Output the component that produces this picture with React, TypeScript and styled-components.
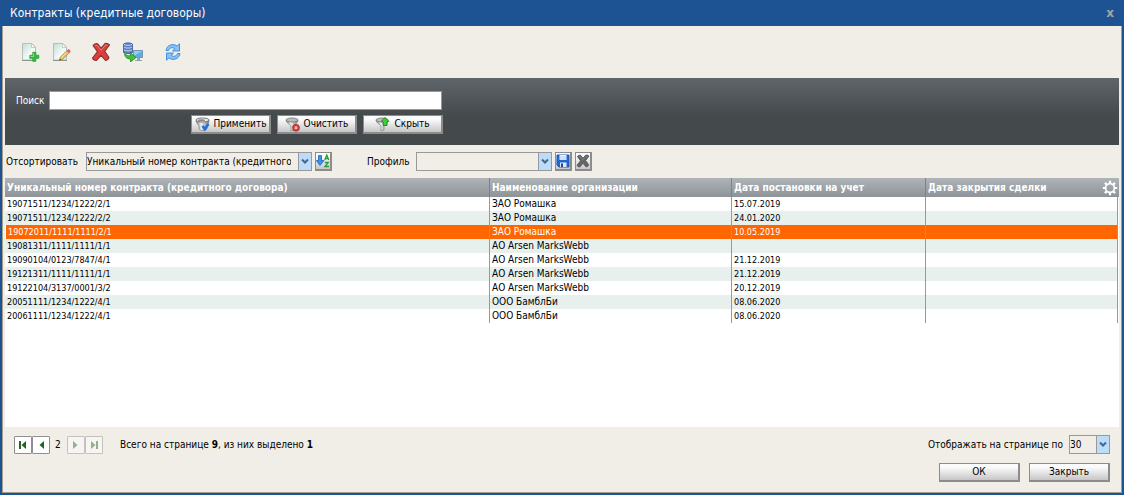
import React, { useState } from "react";
import styled, { createGlobalStyle, css } from "styled-components";

const GlobalStyle = createGlobalStyle`
  * { box-sizing: border-box; }
  body { margin: 0; background: #1e5393; }
  body, button, input, select {
    font-family: "DejaVu Sans Condensed", "DejaVu Sans", Verdana, sans-serif;
    font-size: 10px;
    line-height: 14px;
    color: #000;
  }
`;

const Window = styled.main`
  display: flex;
  flex-direction: column;
  min-height: 100vh;
  padding: 0 2px 2px;
  background: #1e5393;
`;

const TitleBar = styled.header`
  display: flex;
  align-items: center;
  justify-content: space-between;
  height: 26px;
  padding: 0 8px;
`;

const Title = styled.h1`
  margin: 0;
  font-size: 12px;
  line-height: 16px;
  font-weight: 400;
  color: #fff;
`;

const CloseButton = styled.button`
  padding: 0;
  border: 0;
  background: none;
  font-family: "DejaVu Sans", Verdana, sans-serif;
  font-size: 12px;
  line-height: 16px;
  font-weight: 700;
  color: #a3a6a5;
`;

const Body = styled.div`
  flex: 1;
  display: flex;
  flex-direction: column;
  padding: 0 2px;
  border: solid #a39f90;
  border-width: 0 1px 1px;
  background: #f1eee7;
`;

const Toolbar = styled.nav`
  display: flex;
  align-items: center;
  height: 52px;
  padding-left: 16px;
  gap: 11px;
`;

const ToolGroup = styled.div`
  display: flex;
  gap: 11px;
  & + & { margin-left: 8px; }
`;

const ToolButton = styled.button`
  display: flex;
  padding: 0;
  border: 0;
  background: none;
`;

const SearchPanel = styled.form`
  height: 67px;
  padding: 13px 11px 0;
  background: linear-gradient(#60656a, #44494c 58%);
`;

const SearchBox = styled.div`
  display: flex;
  flex-direction: column;
  gap: 5px;
  max-width: 427px;
`;

const SearchLine = styled.label`
  display: flex;
  align-items: center;
  gap: 4px;
  padding-right: 1px;
  color: #fff;
`;

const SearchInput = styled.input`
  flex: 1;
  min-width: 0;
  height: 19px;
  padding: 0 2px;
  border: 1px solid #979a9c;
  background: #fff;
`;

const SearchActions = styled.div`
  display: flex;
  justify-content: flex-end;
  gap: 6px;
`;

const raised = css`
  display: flex;
  align-items: center;
  justify-content: center;
  height: 19px;
  padding: 0;
  border: solid #8c8c8c;
  border-width: 1px 2px 2px 1px;
  background: linear-gradient(#fbfbfb 20%, #c6c6c6);
`;

const RaisedButton = styled.button<{ $width: number }>`
  ${raised}
  width: ${(p) => p.$width}px;
  gap: 3px;
`;

const IconButton = styled.button`
  ${raised}
  width: 17px;
`;

const SortBar = styled.div`
  display: flex;
  align-items: center;
  height: 33px;
  gap: 3px;
`;

const Field = styled.label<{ $labelWidth: number }>`
  display: flex;
  align-items: center;
  & > span:first-child { width: ${(p) => p.$labelWidth}px; padding-left: 1px; }
`;

const ProfileField = styled(Field)`
  margin-left: 31px;
`;

const SelectBox = styled.span<{ $width: number }>`
  position: relative;
  display: flex;
  width: ${(p) => p.$width}px;
  height: 19px;

  select {
    width: 100%;
    padding: 0 20px 0 0;
    border: 1px solid #999;
    border-radius: 0;
    background: #f1eee7;
    appearance: none;
  }
`;

const Arrow = styled.span`
  position: absolute;
  top: 1px;
  right: 1px;
  bottom: 1px;
  display: flex;
  align-items: center;
  justify-content: center;
  width: 13px;
  border-left: 1px solid #999;
  background: #bcdcfa;
  pointer-events: none;
`;

const TableArea = styled.section`
  position: relative;
  flex: 1;
  min-height: 249px;
  background: #fff;
`;

const Table = styled.table`
  width: 100%;
  table-layout: fixed;
  border-collapse: separate;
  border-spacing: 0;
`;

const HeadRow = styled.tr`
  background: linear-gradient(#afb4b8, #8d9397);

  th {
    height: 19px;
    padding: 0 2px;
    border-right: 1px solid #7f8386;
    text-align: left;
    color: #fff;
    white-space: nowrap;
    overflow: hidden;
  }
  th:last-child { border-right: 0; }
`;

const DataRow = styled.tr<{ $selected: boolean }>`
  background: #fff;
  &:nth-child(even) { background: #e8f0ed; }

  td {
    height: 14px;
    padding: 0 2px;
    border-right: 1px solid #999;
    font-size: 9px;
    white-space: nowrap;
    overflow: hidden;
  }
  td:nth-child(2) { font-size: 10px; }
  td:last-child {
    border-right-color: #fff;
    box-shadow: inset -1px 0 #999;
  }

  ${(p) => p.$selected && css`
    && { background: #f60; }
    td { color: #fff; }
    td:first-child { border-left: 1px solid #fff; }
  `}
`;

const SettingsButton = styled.button`
  position: absolute;
  top: 2px;
  right: 1px;
  padding: 0;
  border: 0;
  background: none;
  display: flex;
`;

const Footer = styled.footer`
  padding: 8px 9px 10px;
`;

const FooterLine = styled.div`
  display: flex;
  align-items: center;
  justify-content: space-between;
  height: 19px;
`;

const Pager = styled.div`
  display: flex;
  align-items: center;
`;

const PagerButton = styled.button`
  display: flex;
  align-items: center;
  justify-content: center;
  width: 18px;
  height: 18px;
  padding: 0;
  border: 1px solid #8e8f94;
  border-radius: 1px;
  background: #fff;
  color: #226422;
  &:disabled { opacity: 0.45; }
`;

const PageNumber = styled.span`
  width: 17px;
  padding-left: 5px;
`;

const Summary = styled.span`
  margin-left: 17px;
`;

const DialogActions = styled.div`
  display: flex;
  justify-content: flex-end;
  gap: 9px;
  margin-top: 9px;
`;

const ChevronIcon = () => (
  <svg width="8" height="7" viewBox="0 0 8 7"><path d="M1 1.5 4 4.5 7 1.5" fill="none" stroke="#46678c" strokeWidth="2" /></svg>
);

const DropDown = ({ width, options, label }: { width: number; options: string[]; label?: string }) => (
  <SelectBox $width={width}>
    <select aria-label={label}>{options.map((o) => <option key={o}>{o}</option>)}</select>
    <Arrow><ChevronIcon /></Arrow>
  </SelectBox>
);

const Sheet = () => (
  <>
    <linearGradient id="sheet" x1="0" y1="0" x2="1" y2="1">
      <stop offset="0" stopColor="#c3dcd6" /><stop offset="0.6" stopColor="#f4faf8" /><stop offset="1" stopColor="#e4eeeb" />
    </linearGradient>
    <path d="M1.500 1.500h9.500l3.500 3.500v13h-13z" fill="url(#sheet)" stroke="#b4c0bc" />
    <path d="M1 18.500h14" stroke="#8a9793" />
    <path d="M10.500 1.500v4h4z" fill="#fff" stroke="#b4c0bc" strokeWidth="0.8" />
  </>
);

const AddIcon = () => (
  <svg width="20" height="20" viewBox="0 0 20 20">
    <Sheet />
    <path d="M10.800 10.500h3v3h3v3h-3v3h-3v-3h-3v-3h3z" fill="#2fbe3c" stroke="#2a9f36" strokeWidth="0.8" transform="translate(1 -.2)" />
    <path d="M12.500 11.500v3h-3" fill="none" stroke="#7ee37f" />
  </svg>
);

const EditIcon = () => (
  <svg width="20" height="20" viewBox="0 0 20 20">
    <Sheet />
    <path d="m7.500 18.500.8-3.300 6-6 2.300 2.300-6 6z" fill="#e8c35c" stroke="#a98836" strokeWidth="0.8" />
    <path d="m9.300 15.800 5.500-5.500" stroke="#fbeaa0" />
    <path d="m13.800 9.700 1-1 2.300 2.300-1 1z" fill="#b9bcc2" />
    <path d="m14.800 8.700 1-1q1-.6 1.800.3t.5 2l-1 1z" fill="#e86064" stroke="#c95054" strokeWidth="0.5" />
    <path d="m7.500 18.500.4-1.800 1.400 1.400z" fill="#443a22" />
  </svg>
);

const CrossIcon = ({ size = 20, fill = "#d8403e", edge = "#8a3030", shine = "#ee7d78" }) => (
  <svg width={size} height={size} viewBox="0 0 20 20">
    <path d="M2 3.500Q4 1.300 6.500 1.700L10 6.200 14 1.500Q16.500 1 18.500 3L13.700 9.300 18 15.500Q17.500 18 14.500 18.500L10 13.300 5.500 18.500Q2 18.500 1.500 16L6.500 9.700z" fill={fill} stroke={edge} strokeWidth="1.100" strokeLinejoin="round" />
    <path d="M4 3.800 6 3.200 10 8.300 14.600 3 16.500 3.200" fill="none" stroke={shine} strokeWidth="1" />
  </svg>
);

const TransferIcon = () => (
  <svg width="22" height="20" viewBox="0 0 22 20">
    <path d="M1.500 2C3 .5 9 .5 10.500 2v8.500C9 12 3 12 1.500 10.500z" fill="#5b7fc4" stroke="#3a5797" strokeWidth="0.8" />
    <path d="M2 2.500c2 1.200 6 1.200 8 0M2 5.200c2 1.200 6 1.200 8 0M2 8c2 1.200 6 1.200 8 0" fill="none" stroke="#c6d6f2" />
    <path d="M11.500 8.500h9v7h-9z" fill="#58aee6" stroke="#7795b0" />
    <path d="M12 9h8l-8 5z" fill="#8ccdf5" />
    <path d="M15 16h3v2h2v1h-7v-1h2z" fill="#98a0a8" />
    <path d="M2.500 11.500c1.500 2 3.500 2.500 6 2.200V11l5.500 4.500L8.500 20v-3C4.500 17 2.500 14.500 2.500 11.500z" fill="#3fc235" stroke="#218a24" strokeWidth="0.8" />
  </svg>
);

const RefreshIcon = () => (
  <svg width="20" height="20" viewBox="0 0 20 20" fill="#86c3f8" stroke="#3a86d8" strokeWidth="0.9" strokeLinejoin="round">
    <path d="M3 8.500C3.500 3.500 9.500 .8 14.200 4L16.500 1.800V9H9.500l2.300-2.400C9.800 5 6.500 5.500 5.500 8.500z" />
    <path d="M17 11.500C16.500 16.500 10.500 19.200 5.800 16L3.500 18.200V11H10.500l-2.300 2.400C10.200 15 13.500 14.500 14.500 11.500z" />
  </svg>
);

const Funnel = () => (
  <>
    <linearGradient id="funnel"><stop offset="0" stopColor="#777" /><stop offset="0.4" stopColor="#f0f0f0" /><stop offset="1" stopColor="#777" /></linearGradient>
    <path d="M1 3c0 3 4 4 5 6v5l3-1V9c1-2 4-3 4-6z" fill="url(#funnel)" stroke="#777" strokeWidth="0.6" />
    <ellipse cx="7" cy="3" rx="6" ry="2" fill="#bcbcbc" stroke="#777" strokeWidth="0.8" />
  </>
);

const ApplyIcon = () => (
  <svg width="16" height="15" viewBox="0 0 16 15">
    <path d="M1 3c0 3 2 4 3 6v3c2 2 6 2 8 0V9c1-2 2-3 2-6z" fill="url(#funnel)" stroke="#777" strokeWidth="0.6" />
    <ellipse cx="7.500" cy="3" rx="6.500" ry="2" fill="#eee" stroke="#6b6b6b" strokeWidth="0.9" />
    <ellipse cx="6.500" cy="3.300" rx="3.500" ry="1" fill="#888" />
    <path d="m7.500 9 2.300 3L13.500 7" fill="none" stroke="#1e72d8" strokeWidth="2.600" />
  </svg>
);

const ClearIcon = () => (
  <svg width="16" height="15" viewBox="0 0 16 15">
    <Funnel />
    <circle cx="11" cy="10.800" r="3.500" fill="#cf3838" stroke="#a32424" strokeWidth="0.6" />
    <path d="m9.700 9.500 2.600 2.600m0-2.600-2.600 2.600" stroke="#f6bcbc" strokeWidth="1.200" />
  </svg>
);

const HideIcon = () => (
  <svg width="16" height="15" viewBox="0 0 16 15">
    <Funnel />
    <path d="M10 .5 13.800 4.300 12 5v3.500H8.300V5L6.300 4.300z" fill="#45cc38" stroke="#15861b" strokeWidth="0.9" />
  </svg>
);

const SortIcon = () => (
  <svg width="14" height="14" viewBox="0 0 14 14">
    <path d="M2.500 1.500h3v5H8L4 11.500 .3 6.500h2.200z" fill="#3c91ea" stroke="#1b62b8" strokeWidth="0.8" />
    <path d="m8.800 6 2-5 2 5M9.300 4.500h3M8.800 8.500h3.500l-3.300 4h4" fill="none" stroke="#2a9a38" strokeWidth="1.300" />
  </svg>
);

const SaveIcon = () => (
  <svg width="14" height="14" viewBox="0 0 14 14">
    <path d="M1 1h12v12H3l-2-2z" fill="#2267cf" stroke="#1d58b4" />
    <path d="M3.500 1h7v5h-7z" fill="#e9f2ff" />
    <path d="M4 3h6M4 5h6" stroke="#a9c4ea" strokeWidth="0.8" />
    <path d="M4 8.500h6.500V13H4z" fill="#e4e8ee" />
    <path d="M5 9.500h2V13H5z" fill="#1d4a93" />
  </svg>
);

const GearIcon = () => (
  <svg width="16" height="16" viewBox="0 0 16 16" fill="none" stroke="#fff">
    <circle cx="8" cy="8" r="4.400" strokeWidth="1.700" />
    <path d="M8 3.500V.8M8 12.500v2.700M3.500 8H.8M12.500 8h2.700M4.800 4.800 2.900 2.900M11.200 11.200l1.900 1.900M4.800 11.200l-1.900 1.900M11.200 4.800l1.900-1.900" strokeWidth="2.200" />
  </svg>
);

const PageIcon = ({ back, edge }: { back?: boolean; edge?: boolean }) => (
  <svg width="10" height="10" viewBox="0 0 10 10" fill="currentColor">
    <path d={back ? "M8 1v8L3.500 5z" : "M2 1v8l4.500-4z"} />
    {edge && <path d={back ? "M1 1h2v8H1z" : "M7 1h2v8H7z"} />}
  </svg>
);

const COLUMNS = [
  "Уникальный номер контракта (кредитного договора)",
  "Наименование организации",
  "Дата постановки на учет",
  "Дата закрытия сделки",
];

const ROWS = [
  ["19071511/1234/1222/2/1", "ЗАО Ромашка", "15.07.2019", ""],
  ["19071511/1234/1222/2/2", "ЗАО Ромашка", "24.01.2020", ""],
  ["19072011/1111/1111/2/1", "ЗАО Ромашка", "10.05.2019", ""],
  ["19081311/1111/1111/1/1", "АО Arsen MarksWebb", "", ""],
  ["19090104/0123/7847/4/1", "АО Arsen MarksWebb", "21.12.2019", ""],
  ["19121311/1111/1111/1/1", "АО Arsen MarksWebb", "21.12.2019", ""],
  ["19122104/3137/0001/3/2", "АО Arsen MarksWebb", "20.12.2019", ""],
  ["20051111/1234/1222/4/1", "ООО БамблБи", "08.06.2020", ""],
  ["20061111/1234/1222/4/1", "ООО БамблБи", "08.06.2020", ""],
];

export default function App() {
  const [selected, setSelected] = useState(2);
  const [query, setQuery] = useState("");

  return (
    <>
      <GlobalStyle />
      <Window>
        <TitleBar>
          <Title>Контракты (кредитные договоры)</Title>
          <CloseButton aria-label="Закрыть окно">x</CloseButton>
        </TitleBar>
        <Body>
          <Toolbar>
            <ToolGroup>
              <ToolButton aria-label="Создать"><AddIcon /></ToolButton>
              <ToolButton aria-label="Редактировать"><EditIcon /></ToolButton>
            </ToolGroup>
            <ToolGroup>
              <ToolButton aria-label="Удалить"><CrossIcon /></ToolButton>
              <ToolButton aria-label="Передать"><TransferIcon /></ToolButton>
            </ToolGroup>
            <ToolGroup>
              <ToolButton aria-label="Обновить"><RefreshIcon /></ToolButton>
            </ToolGroup>
          </Toolbar>

          <SearchPanel onSubmit={(e) => e.preventDefault()}>
            <SearchBox>
              <SearchLine>
                Поиск
                <SearchInput value={query} onChange={(e) => setQuery(e.target.value)} />
              </SearchLine>
              <SearchActions>
                <RaisedButton $width={80} type="submit"><ApplyIcon />Применить</RaisedButton>
                <RaisedButton $width={80} type="button" onClick={() => setQuery("")}><ClearIcon />Очистить</RaisedButton>
                <RaisedButton $width={80} type="button"><HideIcon />Скрыть</RaisedButton>
              </SearchActions>
            </SearchBox>
          </SearchPanel>

          <SortBar>
            <Field $labelWidth={81}>
              <span>Отсортировать</span>
              <DropDown width={226} options={COLUMNS} />
            </Field>
            <IconButton aria-label="Порядок сортировки"><SortIcon /></IconButton>
            <ProfileField $labelWidth={50}>
              <span>Профиль</span>
              <DropDown width={136} options={[""]} />
            </ProfileField>
            <IconButton aria-label="Сохранить профиль"><SaveIcon /></IconButton>
            <IconButton aria-label="Удалить профиль">
              <CrossIcon size={14} fill="#666" edge="#444" shine="#8a8a8a" />
            </IconButton>
          </SortBar>

          <TableArea>
            <Table>
              <colgroup>
                <col />
                <col width="242" />
                <col width="194" />
                <col width="193" />
              </colgroup>
              <thead>
                <HeadRow>{COLUMNS.map((c) => <th key={c} scope="col">{c}</th>)}</HeadRow>
              </thead>
              <tbody>
                {ROWS.map((row, i) => (
                  <DataRow key={row[0]} $selected={i === selected} onClick={() => setSelected(i)}>
                    {row.map((cell, j) => <td key={j}>{cell}</td>)}
                  </DataRow>
                ))}
              </tbody>
            </Table>
            <SettingsButton aria-label="Настройка столбцов"><GearIcon /></SettingsButton>
          </TableArea>

          <Footer>
            <FooterLine>
              <Pager>
                <PagerButton aria-label="Первая страница"><PageIcon back edge /></PagerButton>
                <PagerButton aria-label="Предыдущая страница"><PageIcon back /></PagerButton>
                <PageNumber>2</PageNumber>
                <PagerButton disabled aria-label="Следующая страница"><PageIcon /></PagerButton>
                <PagerButton disabled aria-label="Последняя страница"><PageIcon edge /></PagerButton>
                <Summary>Всего на странице <b>9</b>, из них выделено <b>1</b></Summary>
              </Pager>
              <Field $labelWidth={142}>
                <span>Отображать на странице по</span>
                <DropDown width={41} options={["30", "50", "100"]} />
              </Field>
            </FooterLine>
            <DialogActions>
              <RaisedButton $width={81}>ОК</RaisedButton>
              <RaisedButton $width={81}>Закрыть</RaisedButton>
            </DialogActions>
          </Footer>
        </Body>
      </Window>
    </>
  );
}
